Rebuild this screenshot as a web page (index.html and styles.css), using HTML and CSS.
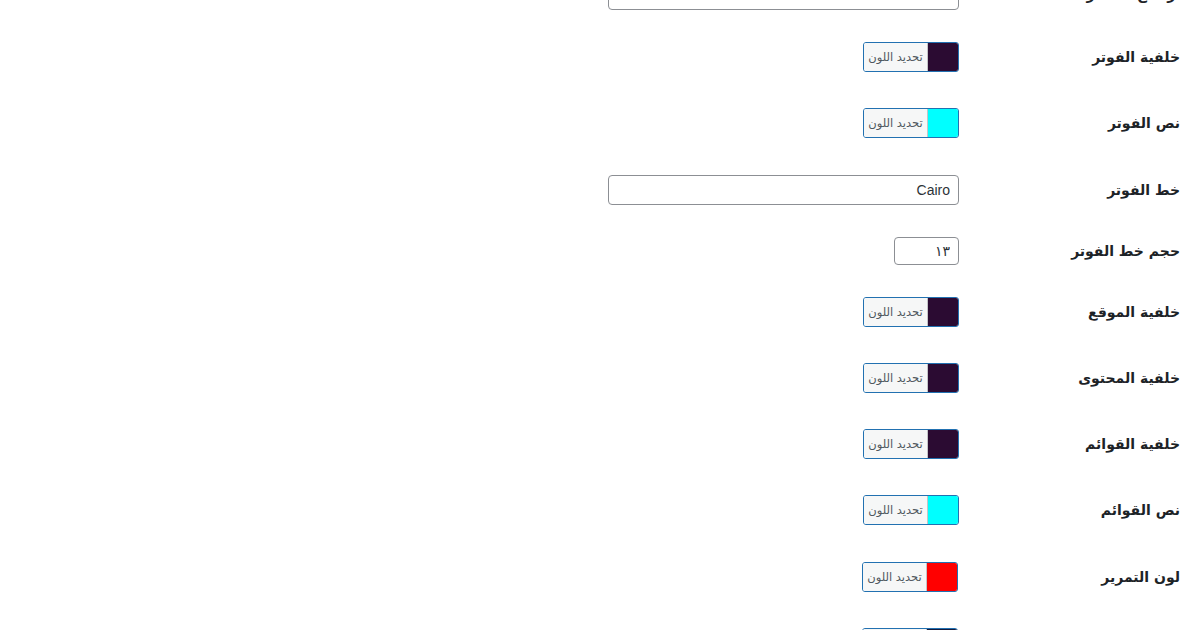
FILE: index.html
```html
<!DOCTYPE html>
<html lang="ar" dir="rtl">
<head>
 <meta charset="utf-8">
 <title>إعدادات القالب</title>
 <link rel="stylesheet" href="styles.css">
</head>
<body>
 <!-- theme options table -->
 <div class="form-table">
  <div class="form-row text-row">
   <label class="row-label" for="logo-height">ارتفاع الشعار</label>
   <div class="row-field"><input class="regular-text" id="logo-height" type="text" value="300"></div>
  </div>

  <div class="form-row color-row">
   <label class="row-label">خلفية الفوتر</label>
   <div class="row-field">
    <button class="color-result" type="button"><span class="swatch plum"></span><span class="result-text">تحديد اللون</span></button>
   </div>
  </div>

  <div class="form-row color-row">
   <label class="row-label">نص الفوتر</label>
   <div class="row-field">
    <button class="color-result" type="button"><span class="swatch cyan"></span><span class="result-text">تحديد اللون</span></button>
   </div>
  </div>

  <div class="form-row text-row">
   <label class="row-label" for="footer-font">خط الفوتر</label>
   <div class="row-field"><input class="regular-text" id="footer-font" type="text" value="Cairo"></div>
  </div>

  <div class="form-row text-row">
   <label class="row-label" for="footer-size">حجم خط الفوتر</label>
   <div class="row-field"><input class="small-text" id="footer-size" type="text" inputmode="numeric" value="١٣"></div>
  </div>

  <div class="form-row color-row">
   <label class="row-label">خلفية الموقع</label>
   <div class="row-field">
    <button class="color-result" type="button"><span class="swatch plum"></span><span class="result-text">تحديد اللون</span></button>
   </div>
  </div>

  <div class="form-row color-row">
   <label class="row-label">خلفية المحتوى</label>
   <div class="row-field">
    <button class="color-result" type="button"><span class="swatch plum"></span><span class="result-text">تحديد اللون</span></button>
   </div>
  </div>

  <div class="form-row color-row">
   <label class="row-label">خلفية القوائم</label>
   <div class="row-field">
    <button class="color-result" type="button"><span class="swatch plum"></span><span class="result-text">تحديد اللون</span></button>
   </div>
  </div>

  <div class="form-row color-row">
   <label class="row-label">نص القوائم</label>
   <div class="row-field">
    <button class="color-result" type="button"><span class="swatch cyan"></span><span class="result-text">تحديد اللون</span></button>
   </div>
  </div>

  <div class="form-row color-row">
   <label class="row-label">لون التمرير</label>
   <div class="row-field shifted">
    <button class="color-result" type="button"><span class="swatch red"></span><span class="result-text">تحديد اللون</span></button>
   </div>
  </div>

  <div class="form-row color-row">
   <label class="row-label">لون الروابط</label>
   <div class="row-field shifted">
    <button class="color-result" type="button"><span class="swatch navy"></span><span class="result-text">تحديد اللون</span></button>
   </div>
  </div>
 </div>
</body>
</html>
```

FILE: styles.css
```css
/* page base */
body {
 margin: 0;
 background: #fff;
 color: #1d2327;
 font-family: "DejaVu Sans", sans-serif;
 direction: rtl;
}

/* options table, scrolled part way down */
.form-table {
 margin-top: -37px;
 padding-right: 20px;
}

.form-row {
 display: flex;
 align-items: center;
}

.text-row {
 padding: 17px 0 15px;
}

.color-row {
 padding: 17px 0 19.3px;
}

/* the label column */
.row-label {
 flex: 0 0 200px;
 padding-left: 10px;
 font-size: 14px;
 font-weight: bold;
 line-height: 28px;
}

.row-field {
 padding-right: 11px;
 display: flex;
}

.row-field.shifted {
 padding-right: 12px;
}

/* text inputs */
.regular-text,
.small-text {
 box-sizing: border-box;
 height: 30px;
 margin: 0;
 padding: 0 8px;
 border: 1px solid #8c8f94;
 border-radius: 4px;
 background: #fff;
 color: #2c3338;
 font-family: "Liberation Sans", "DejaVu Sans", sans-serif;
 font-size: 14px;
 text-align: right;
 direction: rtl;
}

.regular-text {
 width: 351px;
}

.small-text {
 width: 65px;
 height: 28px;
}

/* colour picker button */
.color-result {
 display: flex;
 width: 96px;
 height: 30px;
 margin: 0;
 padding: 0;
 border: 1px solid #2271b1;
 border-radius: 3px;
 overflow: hidden;
 background: #f6f7f7;
 cursor: pointer;
}

.swatch {
 width: 30px;
 height: 100%;
}

.swatch.plum { background: #2b0b32; }
.swatch.cyan { background: #00ffff; }
.swatch.red { background: #ff0000; }
.swatch.navy { background: #141a3c; }

.result-text {
 flex: 1;
 height: 100%;
 border-right: 1px solid #c3c4c7;
 background: #f6f7f7;
 color: #50575e;
 font-family: "DejaVu Sans", sans-serif;
 font-size: 11.5px;
 line-height: 28px;
 text-align: center;
}
```
